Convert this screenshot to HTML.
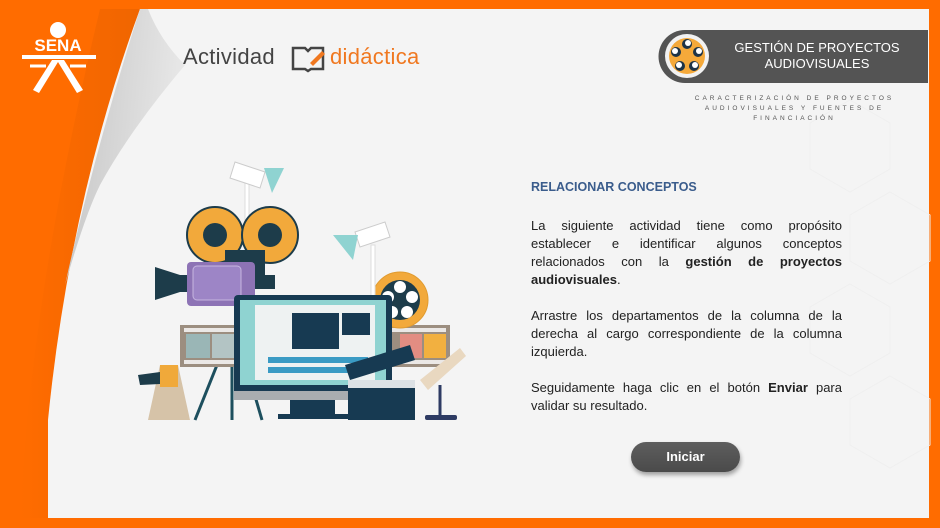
<!DOCTYPE html>
<html><head><meta charset="utf-8">
<style>
*{margin:0;padding:0;box-sizing:border-box}
body{width:940px;height:528px;overflow:hidden;background:#ff6c00;font-family:"Liberation Sans",sans-serif;position:relative}
.txt{position:absolute;left:531px;width:311px;font-size:13px;line-height:18px;color:#222;text-align:justify}
.txt p{margin:0 0 18px 0}
</style></head><body>
<svg width="940" height="528" style="position:absolute;left:0;top:0">
<defs>
<linearGradient id="sh" x1="0" x2="1"><stop offset="0" stop-color="#ff6c00"/><stop offset="1" stop-color="#e05e00"/></linearGradient>
<linearGradient id="cg" x1="0" y1="0" x2="1" y2="0.2"><stop offset="0" stop-color="#c4c4c4"/><stop offset="1" stop-color="#e8e8e8"/></linearGradient>
</defs>
<path d="M100 9 L140 9 Q70 200 48 420 L48 518 L20 518 Q30 300 100 9 Z" fill="url(#sh)" opacity="0.5"/>
<path d="M140 9 L929 9 L929 518 L48 518 L48 420 Q70 200 140 9 Z" fill="#f4f4f4"/>
<path d="M140 9 Q95 150 65 285 Q85 215 100 185 Q130 130 185 65 Q160 40 148 9 Z" fill="url(#cg)"/>
<g stroke="#efefef" fill="none" stroke-width="1">
<path d="M850 100 l40 23 v46 l-40 23 l-40 -23 v-46z"/><path d="M890 192 l40 23 v46 l-40 23 l-40 -23 v-46z"/><path d="M850 284 l40 23 v46 l-40 23 l-40 -23 v-46z"/><path d="M890 376 l40 23 v46 l-40 23 l-40 -23 v-46z"/>
</g>
<circle cx="58" cy="30" r="8" fill="#fff"/>
<text x="58" y="51" font-family="Liberation Sans" font-weight="bold" font-size="17" fill="#fff" text-anchor="middle">SENA</text>
<rect x="22" y="55" width="74" height="4" fill="#fff"/>
<path d="M52 60 L33 90 L39 93 L58 62 L77 93 L83 90 L64 60 Z" fill="#fff"/>
<path d="M30 66 L46 66 M70 66 L86 66" stroke="#fff" stroke-width="3"/>
<path d="M685 30 L928 30 L928 83 L685 83 A26.5 26.5 0 0 1 685 30 Z" fill="#545454"/>
<circle cx="687" cy="56" r="22" fill="#f2f2f2"/>
<circle cx="687" cy="56" r="18" fill="#f5a93a"/>
<g fill="#1d3347"><circle cx="687" cy="44" r="5"/><circle cx="698" cy="52" r="5"/><circle cx="694" cy="66" r="5"/><circle cx="680" cy="66" r="5"/><circle cx="676" cy="52" r="5"/></g>
<g fill="#fff"><circle cx="688" cy="43" r="3"/><circle cx="699" cy="51" r="3"/><circle cx="695" cy="65" r="3"/><circle cx="679" cy="65" r="3"/><circle cx="675" cy="51" r="3"/></g>
<path d="M293 48 h12 l3 3 l3 -3 h12 v21 h-12 l-3 2 l-3 -2 h-12z" fill="none" stroke="#444" stroke-width="2.5"/>
<path d="M310 63 l12 -12 l3 3 l-12 12 z" fill="#f07820"/>

<g stroke="#1d4f5e" stroke-width="3"><line x1="225" y1="345" x2="195" y2="420"/><line x1="232" y1="345" x2="232" y2="420"/><line x1="240" y1="345" x2="262" y2="420"/></g>
<rect x="245" y="175" width="4" height="125" fill="#fff" stroke="#ddd"/>
<path d="M235 162 l30 10 l-5 16 l-30 -10z" fill="#fff" stroke="#ccc"/>
<path d="M264 168 l20 0 l-12 25 z" fill="#8fd3d1"/>
<circle cx="215" cy="235" r="28" fill="#f2a93b" stroke="#1d3c4a" stroke-width="2"/>
<circle cx="215" cy="235" r="12" fill="#1d3c4a"/>
<circle cx="270" cy="235" r="28" fill="#f2a93b" stroke="#1d3c4a" stroke-width="2"/>
<circle cx="270" cy="235" r="12" fill="#1d3c4a"/>
<path d="M225 250 L265 250 L265 280 L225 280Z" fill="#1d3c4a"/>
<path d="M155 267 L180 275 L188 275 L188 292 L180 292 L155 300 Z" fill="#1d3c4a"/>
<rect x="187" y="262" width="68" height="44" rx="4" fill="#8d73b5"/>
<rect x="193" y="266" width="48" height="34" rx="4" fill="#9d85c6" stroke="#c6b6e0"/>
<rect x="255" y="275" width="20" height="14" fill="#1d3c4a"/>
<rect x="180" y="325" width="270" height="42" fill="#9c8e80"/>
<g fill="#fff"><rect x="184" y="328" width="262" height="4" opacity="0.8"/><rect x="184" y="360" width="262" height="4" opacity="0.8"/></g>
<rect x="186" y="334" width="24" height="24" fill="#9ab6b6"/><rect x="212" y="334" width="24" height="24" fill="#b3c4c4"/>
<rect x="400" y="334" width="22" height="24" fill="#e38d82"/><rect x="424" y="334" width="22" height="24" fill="#f2b040"/>
<circle cx="400" cy="300" r="28" fill="#f2a93b" stroke="#e09b30"/>
<circle cx="400" cy="300" r="20" fill="#1d3c4a"/>
<g fill="#fff"><circle cx="400" cy="287" r="6"/><circle cx="412" cy="297" r="6"/><circle cx="407" cy="312" r="6"/><circle cx="392" cy="312" r="6"/><circle cx="388" cy="297" r="6"/></g>
<rect x="371" y="245" width="4" height="60" fill="#fff" stroke="#ddd"/>
<path d="M355 232 l30 -10 l5 15 l-30 10z" fill="#fff" stroke="#ccc"/>
<path d="M333 235 l25 0 l-5 25 z" fill="#8fd3d1"/>
<rect x="234" y="295" width="158" height="102" rx="4" fill="#173a52"/>
<rect x="240" y="300" width="146" height="85" fill="#8fd3d1"/>
<rect x="255" y="305" width="120" height="75" fill="#eef2f2"/>
<rect x="292" y="313" width="47" height="36" fill="#173a52"/>
<rect x="342" y="313" width="28" height="22" fill="#173a52"/>
<rect x="268" y="357" width="100" height="6" fill="#3a9bc4"/><rect x="268" y="367" width="100" height="6" fill="#3a9bc4"/>
<rect x="234" y="391" width="158" height="9" fill="#a9adb0"/>
<rect x="290" y="400" width="45" height="14" fill="#173a52"/>
<rect x="278" y="414" width="70" height="5" fill="#173a52"/>
<path d="M345 365 L410 345 L415 360 L350 380Z" fill="#173a52"/>
<rect x="348" y="380" width="67" height="40" fill="#173a52"/>
<rect x="348" y="380" width="67" height="8" fill="#fff" opacity="0.85"/>
<path d="M160 365 L178 365 L190 420 L148 420 Z" fill="#d6c3a8"/>
<rect x="160" y="365" width="18" height="22" fill="#f0a93a"/>
<path d="M138 375 L160 372 L160 384 L140 385Z" fill="#1d3c4a"/>
<path d="M420 380 L460 348 L466 356 L428 390Z" fill="#e9d8c0"/>
<line x1="440" y1="385" x2="440" y2="418" stroke="#2e3b63" stroke-width="3"/>
<rect x="425" y="415" width="32" height="5" rx="2" fill="#2e3b63"/>
</svg>

<div style="position:absolute;left:183px;top:44px;font-size:22px;color:#444;letter-spacing:0.3px">Actividad</div>
<div style="position:absolute;left:330px;top:44px;font-size:22px;color:#f07820;letter-spacing:0.3px">didáctica</div>

<div style="position:absolute;left:712px;top:40px;width:210px;text-align:center;color:#fff;font-size:13px;line-height:16px">GESTIÓN DE PROYECTOS<br>AUDIOVISUALES</div>
<div style="position:absolute;left:672px;top:94px;width:245px;text-align:center;color:#555;font-size:6.5px;line-height:10px;letter-spacing:3px">CARACTERIZACIÓN DE PROYECTOS AUDIOVISUALES Y FUENTES DE FINANCIACIÓN</div>

<div style="position:absolute;left:531px;top:180px;font-size:12.5px;font-weight:bold;color:#3a5c8c">RELACIONAR CONCEPTOS</div>
<div class="txt" style="top:217px">
<p>La siguiente actividad tiene como propósito establecer e identificar algunos conceptos relacionados con la <b>gestión de proyectos audiovisuales</b>.</p>
<p>Arrastre los departamentos de la columna de la derecha al cargo correspondiente de la columna izquierda.</p>
<p>Seguidamente haga clic en el botón <b>Enviar</b> para validar su resultado.</p>
</div>

<div style="position:absolute;left:631px;top:442px;width:109px;height:30px;border-radius:15px;background:linear-gradient(#5e5e5e,#4a4a4a);box-shadow:1px 3px 4px rgba(0,0,0,0.35);color:#fff;font-weight:bold;font-size:13px;text-align:center;line-height:30px">Iniciar</div>
</body></html>
